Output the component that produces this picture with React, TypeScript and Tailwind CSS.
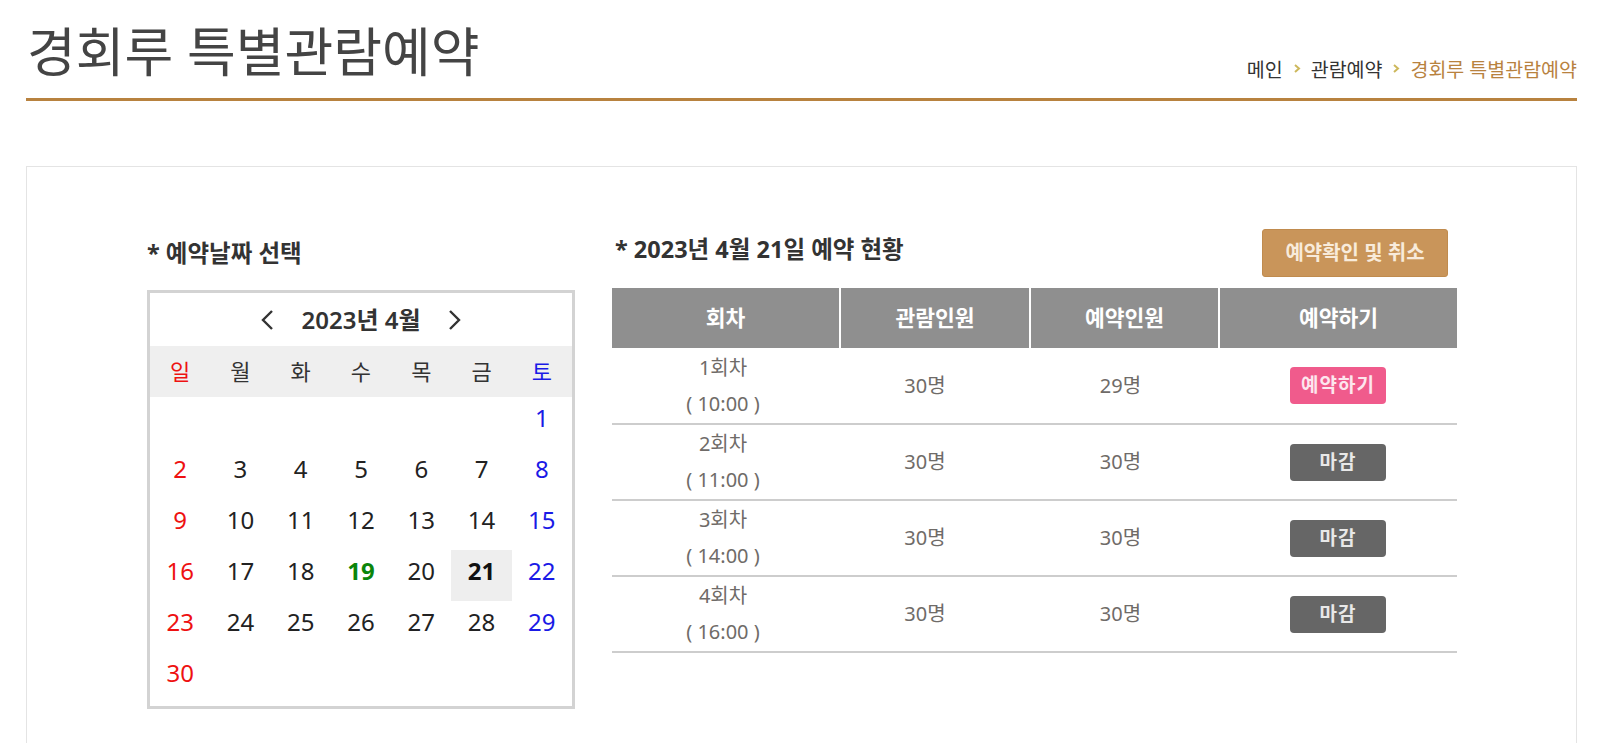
import React from "react";

const WEEKDAYS = ["일", "월", "화", "수", "목", "금", "토"];

// April 2023 starts on Saturday
const WEEKS: (number | null)[][] = [
  [null, null, null, null, null, null, 1],
  [2, 3, 4, 5, 6, 7, 8],
  [9, 10, 11, 12, 13, 14, 15],
  [16, 17, 18, 19, 20, 21, 22],
  [23, 24, 25, 26, 27, 28, 29],
  [30, null, null, null, null, null, null],
];

const SESSIONS = [
  { round: "1회차", time: "( 10:00 )", capacity: "30명", booked: "29명", open: true },
  { round: "2회차", time: "( 11:00 )", capacity: "30명", booked: "30명", open: false },
  { round: "3회차", time: "( 14:00 )", capacity: "30명", booked: "30명", open: false },
  { round: "4회차", time: "( 16:00 )", capacity: "30명", booked: "30명", open: false },
];

function Crumb() {
  return (
    <svg width="8" height="9" viewBox="0 0 8 9" className="mx-[10px] mb-[2px]">
      <path d="M2 1 L6 4.5 L2 8" fill="none" stroke="#cdb85c" strokeWidth="2" />
    </svg>
  );
}

function Chevron({ dir }: { dir: "left" | "right" }) {
  return (
    <svg width="14" height="22" viewBox="0 0 14 22">
      <path
        d={dir === "left" ? "M12 2 L3 11 L12 20" : "M2 2 L11 11 L2 20"}
        fill="none"
        stroke="#333"
        strokeWidth="2.4"
      />
    </svg>
  );
}

function dayColor(col: number, day: number) {
  if (day === 19) return "text-[#0b850b] font-bold";
  if (day === 21) return "text-[#111] font-bold";
  if (col === 0) return "text-[#ee1111]";
  if (col === 6) return "text-[#1a1ae6]";
  return "text-[#222]";
}

function Calendar() {
  return (
    <div className="w-[428px] border-[3px] border-[#d3d3d3] bg-white">
      <div className="h-[53px] flex items-center justify-center">
        <Chevron dir="left" />
        <span className="mx-[27px] text-[24px] font-semibold text-[#333] leading-none">2023년 4월</span>
        <Chevron dir="right" />
      </div>
      <div className="h-[51px] grid grid-cols-7 bg-[#efefef]">
        {WEEKDAYS.map((w, i) => (
          <div
            key={w}
            className={`flex items-center justify-center text-[22px] ${
              i === 0 ? "text-[#ee1111]" : i === 6 ? "text-[#1a1ae6]" : "text-[#333]"
            }`}
          >
            {w}
          </div>
        ))}
      </div>
      <div className="pb-[3px]">
        {WEEKS.map((week, r) => (
          <div key={r} className="grid grid-cols-7 h-[51px]">
            {week.map((d, c) => (
              <div
                key={c}
                className={`flex items-center justify-center pb-[10px] text-[24px] ${
                  d === 21 ? "bg-[#eeeeee]" : ""
                } ${d ? dayColor(c, d) : ""}`}
              >
                {d}
              </div>
            ))}
          </div>
        ))}
      </div>
    </div>
  );
}

export default function App() {
  return (
    <div className="min-h-screen bg-white pl-[26px] pr-[23px] font-['Noto_Sans','Noto_Sans_CJK_KR',sans-serif]">
      {/* Page title */}
      <div className="pt-[25px] pb-[19px] flex items-end justify-between border-b-[3px] border-[#b8823f]">
        <h1 className="mb-[1px] text-[53px] leading-none text-[#444] font-normal pl-[1px]">경회루 특별관람예약</h1>
        <div className="flex items-center text-[19.5px] leading-none">
          <span className="text-[#333]">메인</span>
          <Crumb />
          <span className="text-[#333]">관람예약</span>
          <Crumb />
          <span className="text-[#b8823f]">경회루 특별관람예약</span>
        </div>
      </div>

      {/* Content box */}
      <div className="mt-[65px] border border-[#e4e4e4] pl-[120px] pt-[62px] pb-[80px] flex items-start">
        <div className="w-[428px]">
          <div className="h-[48px] pt-[1px] flex items-center text-[23.5px] font-bold text-[#333]">* 예약날짜 선택</div>
          <div className="mt-[13px]">
            <Calendar />
          </div>
        </div>

        <div className="ml-[37px] w-[845px]">
          <div className="h-[48px] flex items-center justify-between">
            <span className="pl-[3px] mb-[6px] text-[23.5px] font-bold text-[#333]">* 2023년 4월 21일 예약 현황</span>
            <button className="mr-[9px] w-[186px] h-[48px] rounded-[3px] bg-[#c9955a] border border-[#c08b4e] text-[20px] font-bold text-[#f8ebdb]">
              예약확인 및 취소
            </button>
          </div>
          <table className="mt-[11px] w-full table-fixed border-collapse">
            <colgroup>
              <col className="w-[228px]" />
              <col className="w-[190px]" />
              <col className="w-[189px]" />
              <col className="w-[238px]" />
            </colgroup>
            <thead>
              <tr className="h-[60px] bg-[#8f8f8f] text-[21.5px] font-bold text-white">
                <th className="font-bold">회차</th>
                <th className="font-bold border-l-2 border-white">관람인원</th>
                <th className="font-bold border-l-2 border-white">예약인원</th>
                <th className="font-bold border-l-2 border-white">예약하기</th>
              </tr>
            </thead>
            <tbody>
              {SESSIONS.map((s) => (
                <tr key={s.round} className="h-[76px] border-b-2 border-[#cdcdcd] text-[20px] text-[#6f6b68]">
                  <td className="text-center leading-[36px] pr-[6px]">
                    <div>{s.round}</div>
                    <div>{s.time}</div>
                  </td>
                  <td className="text-center pr-[20px]">{s.capacity}</td>
                  <td className="text-center pr-[8px]">{s.booked}</td>
                  <td className="text-center">
                    {s.open ? (
                      <button className="w-[96px] h-[37px] rounded-[4px] bg-[#f05b8c] text-[19px] font-bold tracking-[1px] text-[#fde6ee]">
                        예약하기
                      </button>
                    ) : (
                      <button className="w-[96px] h-[37px] rounded-[4px] bg-[#666666] text-[19px] font-bold tracking-[1px] text-[#e8e8e8]">
                        마감
                      </button>
                    )}
                  </td>
                </tr>
              ))}
            </tbody>
          </table>
        </div>
      </div>
    </div>
  );
}
